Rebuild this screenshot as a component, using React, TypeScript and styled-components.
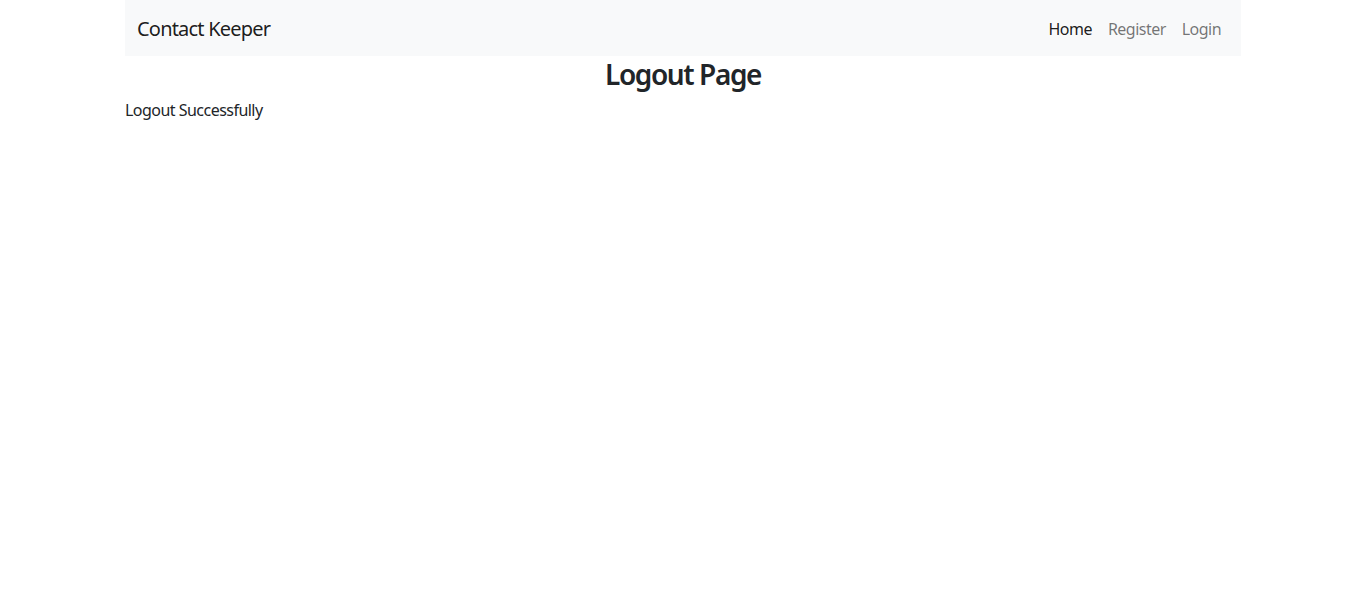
import React from "react";
import styled, { createGlobalStyle } from "styled-components";

const Global = createGlobalStyle`
  * { box-sizing: border-box; }
  body {
    margin: 0;
    font-family: "Noto Sans", "Open Sans", sans-serif;
    font-size: 16px;
    line-height: 1.5;
    letter-spacing: -0.033em;
    color: #212529;
    background: #fff;
  }
`;

const Container = styled.div`
  max-width: 1140px;
  margin: 0 auto;
  padding: 0 12px;
`;

const Navbar = styled.nav`
  background: #f8f9fa;
  padding: 8px 12px;
  display: flex;
  align-items: center;
  justify-content: space-between;
`;

const Brand = styled.a`
  font-size: 20px;
  line-height: 30px;
  padding: 6px 0 4px;
  letter-spacing: -0.04em;
  color: rgba(0, 0, 0, 0.9);
  text-decoration: none;
`;

const NavList = styled.ul`
  list-style: none;
  margin: 0;
  padding: 0;
  display: flex;
`;

const NavLink = styled.a<{ $active?: boolean }>`
  display: block;
  padding: 9px 8px 7px;
  color: ${(p) => (p.$active ? "rgba(0,0,0,0.9)" : "rgba(0,0,0,0.55)")};
  text-decoration: none;
`;

const Title = styled.h3`
  margin: 2px 0 6px;
  font-size: 28px;
  line-height: 1.2;
  font-weight: 600;
  letter-spacing: -0.05em;
  text-align: center;
`;

const Text = styled.p`
  margin: 0 0 16px;
`;

export default function App() {
  return (
    <>
      <Global />
      <Container>
        <Navbar>
          <Brand href="#">Contact Keeper</Brand>
          <NavList>
            <li><NavLink $active href="#">Home</NavLink></li>
            <li><NavLink href="#">Register</NavLink></li>
            <li><NavLink href="#">Login</NavLink></li>
          </NavList>
        </Navbar>
        <Title>Logout Page</Title>
        <Text>Logout Successfully</Text>
      </Container>
    </>
  );
}
